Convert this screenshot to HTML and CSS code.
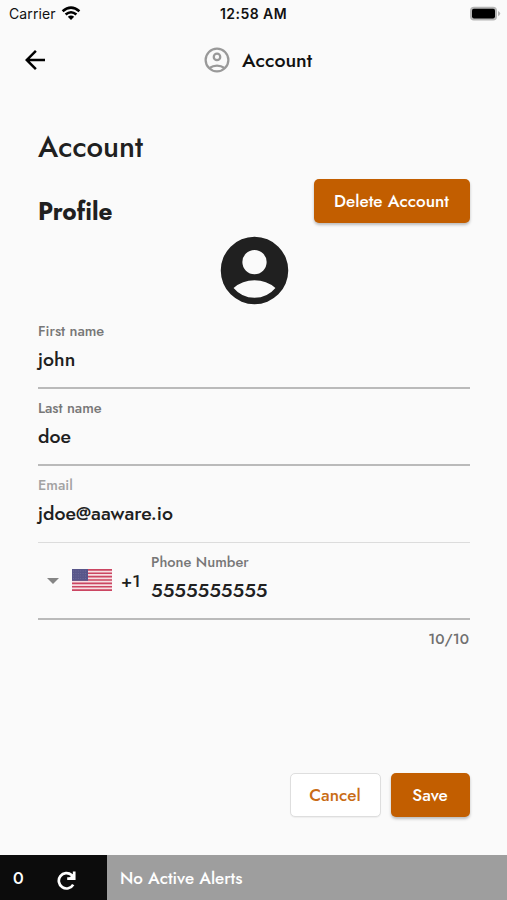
FILE: index.html
```html
<!DOCTYPE html>
<html lang="en">
<head>
<meta charset="utf-8">
<title>Account</title>
<link rel="stylesheet" href="styles.css">
</head>
<body>
<div class="screen">
  <div class="status">
    <div class="carrier"><span>Carrier</span>
      <svg class="wifi" width="20" height="15" viewBox="0 0 20 15"><g fill="none" stroke="#000" stroke-width="2.6"><path d="M1.6 5.2Q10 -2 18.4 5.2"/><path d="M4.6 8.6Q10 3.9 15.4 8.6"/></g><path d="M6.8 10.7Q10 8.2 13.2 10.7L10 14Z"/></svg>
    </div>
    <div class="clock">12:58 AM</div>
    <svg class="battery" width="32" height="16" viewBox="0 0 32 16"><rect x="1" y=".8" width="27" height="13.6" rx="4" fill="#b5b5b5"/><path d="M29 5q2.2 1 2.2 2.6T29 10.2z" fill="#b5b5b5"/><rect x="3" y="2.8" width="23" height="9.6" rx="1.8"/></svg>
  </div>
  <header class="appbar">
    <svg class="back" width="30" height="30" viewBox="0 0 24 24"><path d="M20 11H7.83l5.59-5.59L12 4l-8 8 8 8 1.41-1.41L7.83 13H20z"/></svg>
    <div class="heading">
      <svg width="30" height="30" viewBox="0 0 24 24" fill="none" stroke="#999" stroke-width="1.8"><circle cx="12" cy="12" r="9.1"/><circle cx="12" cy="9.5" r="2.6"/><path d="M6 18.4Q8.7 16.4 12 16.4T18 18.4"/></svg>
      <span>Account</span>
    </div>
  </header>
  <main class="content">
    <h1>Account</h1>
    <div class="profile">
      <h2>Profile</h2>
      <button class="btn delete">Delete Account</button>
    </div>
    <svg class="avatar" width="81" height="81" viewBox="0 0 24 24"><path fill="#202020" fill-rule="evenodd" d="M12 2a10 10 0 1 0 0 20 10 10 0 0 0 0-20zm0 3.9a3.6 3.6 0 1 1 0 7.2 3.6 3.6 0 0 1 0-7.2zM5.8 17.2Q8.4 14.9 12 14.9T18.2 17.2Q15.8 20.1 12 20.1T5.8 17.2z"/></svg>
    <div class="field"><label>First name</label><div class="value">john</div></div>
    <div class="field"><label>Last name</label><div class="value">doe</div></div>
    <div class="field disabled"><label>Email</label><div class="value">jdoe@aaware.io</div></div>
    <div class="field phone">
      <svg class="caret" width="12" height="6" viewBox="0 0 12 6"><path d="M0 0h12L6 6z" fill="#858585"/></svg>
      <svg class="flag" width="40" height="22" viewBox="0 0 40 22"><path fill="#f6dfe3" d="M0 0h40v22H0z"/><path stroke="#cb4562" stroke-width="1.69" d="M0 .85h40M0 4.23h40M0 7.61h40M0 11h40M0 14.38h40M0 17.76h40M0 21.15h40"/><path fill="#58568a" d="M0 0h16v11.8H0z"/><path stroke="#77759f" stroke-width=".7" stroke-dasharray="1 1.4" d="M1 2h14M1 4.5h14M1 7h14M1 9.5h14"/></svg>
      <span class="code">+1</span>
      <div><label>Phone Number</label><div class="value">5555555555</div></div>
    </div>
    <div class="counter">10/10</div>
    <div class="actions">
      <button class="btn cancel">Cancel</button>
      <button class="btn save">Save</button>
    </div>
  </main>
  <footer class="alerts">
    <div class="summary"><span>0</span>
      <svg width="20" height="20" viewBox="0 0 20 20" fill="none" stroke="#fff" stroke-width="2.7"><path d="M17.2 14.6A7.7 7.7 0 1 1 15.6 5L17.5 7"/><path d="M18.2 1.5V8.6H11.2"/><path fill="#fff" stroke="none" d="M18.5 2.5V8.5H12.5z"/></svg>
    </div>
    <div class="message">No Active Alerts</div>
  </footer>
</div>
</body>
</html>
```

FILE: styles.css
```css
* { box-sizing: border-box; }
body { margin: 0; background: #fafafa; color: #202020; font-family: Jost, Lato, sans-serif; font-weight: 500; }
svg { display: block; flex: none; }
h1, h2 { margin: 0; }
.screen { width: 507px; height: 900px; display: flex; flex-direction: column; overflow: hidden; }
.status { height: 28px; display: grid; grid-template-columns: 1fr auto 1fr; align-items: center; padding: 0 6px 0 9px; font: 400 14px/28px Inter, sans-serif; color: #111; }
.carrier { display: flex; gap: 5px; align-items: center; letter-spacing: .1px; }
.wifi { margin-top: -2px; }
.clock { font-weight: 600; letter-spacing: .45px; margin-right: 3px; }
.battery { justify-self: end; margin-top: -1px; }
.appbar { height: 64px; display: grid; grid-template-columns: 1fr auto 1fr; align-items: center; padding: 0 17px 0 20px; color: #111; }
.back, .heading svg { margin-top: -1px; }
.heading { display: flex; align-items: center; gap: 10px; font-size: 19.6px; line-height: 28px; margin-left: 4px; }
.content { flex: 1; padding: 35px 37px 0 38px; display: flex; flex-direction: column; }
h1 { font-size: 29.3px; line-height: 40px; font-weight: 500; }
.profile { display: flex; justify-content: space-between; height: 66px; padding-top: 12px; }
h2 { font-size: 24.4px; line-height: 32px; font-weight: 700; margin-top: 17px; }
.btn { height: 44px; padding: 0; border: 0; border-radius: 5px; background: #c25e00; color: #fff; font: 500 17.1px/44px Jost, Lato, sans-serif; box-shadow: 0 2px 3px rgba(0,0,0,.25); }
.delete { width: 156px; padding-right: 1px; }
.avatar { align-self: center; margin-top: -3px; margin-bottom: 1px; }
.field { height: 77px; border-bottom: 2px solid #bababa; }
.field label { display: block; font-size: 14.6px; line-height: 20px; padding-top: 9px; color: #777; }
.value { font-size: 19.5px; line-height: 28px; margin-top: 4px; }
.disabled { border-bottom: 1px solid #dcdcdc; }
.disabled label { color: #a3a3a3; }
.phone { display: flex; align-items: center; padding-left: 9px; }
.phone > div { align-self: flex-start; margin-left: 11px; }
.flag { margin: -1px 0 0 13px; }
.code { width: 19px; margin-left: 9px; font-size: 17.5px; }
.counter { align-self: flex-end; margin-top: 9px; margin-right: 1px; font-size: 14.8px; line-height: 20px; color: #707070; }
.actions { display: flex; justify-content: flex-end; gap: 10px; margin-top: 124px; }
.cancel { width: 91px; padding-right: 1px; background: #fff; color: #c96c16; border: 1px solid #dedede; line-height: 42px; box-shadow: 0 1px 1px rgba(0,0,0,.05); }
.save { width: 79px; padding-right: 1px; }
.alerts { height: 45px; display: flex; color: #fff; font-size: 17px; line-height: 46px; }
.summary { width: 107px; background: #0c0c0c; display: flex; align-items: center; gap: 32px; padding-left: 13px; }
.summary svg { margin-top: 5px; }
.message { flex: 1; background: #9e9e9e; padding-left: 13px; }
```
